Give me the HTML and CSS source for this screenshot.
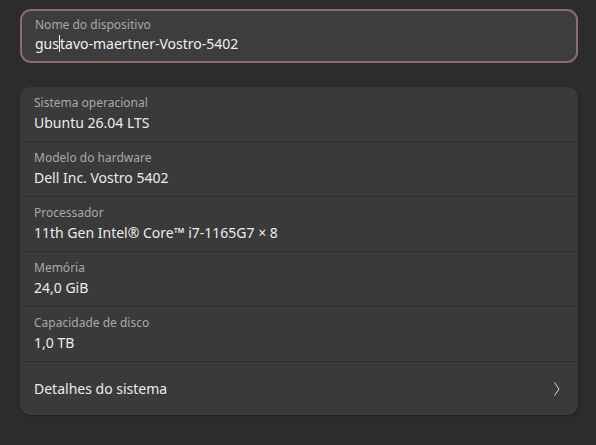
FILE: index.html
```html
<!DOCTYPE html>
<html lang="pt">
<head>
    <meta charset="UTF-8">
    <meta name="viewport" content="width=device-width, initial-scale=1.0">
    <title>Sobre</title>
    <link rel="stylesheet" href="styles.css">
</head>
<body>
    <div class="entry-row">
        <div class="row-label">Nome do dispositivo</div>
        <div class="entry-value">gus<span class="caret"></span>tavo-maertner-Vostro-5402</div>
    </div>

    <div class="info-list">
        <div class="info-row">
            <div class="row-label">Sistema operacional</div>
            <div class="row-value">Ubuntu 26.04 LTS</div>
        </div>
        <div class="info-row">
            <div class="row-label">Modelo do hardware</div>
            <div class="row-value">Dell Inc. Vostro 5402</div>
        </div>
        <div class="info-row">
            <div class="row-label">Processador</div>
            <div class="row-value">11th Gen Intel® Core™ i7-1165G7 × 8</div>
        </div>
        <div class="info-row">
            <div class="row-label">Memória</div>
            <div class="row-value">24,0 GiB</div>
        </div>
        <div class="info-row">
            <div class="row-label">Capacidade de disco</div>
            <div class="row-value">1,0 TB</div>
        </div>
        <div class="link-row">
            <span class="link-title">Detalhes do sistema</span>
            <svg class="chevron" width="8" height="16" viewBox="0 0 8 16">
                <path d="M1.5 1.5 L6 8 L1.5 14.5" fill="none" stroke="#d8d8d8" stroke-width="1"/>
            </svg>
        </div>
    </div>
</body>
</html>
```

FILE: styles.css
```css
body {
    margin: 0;
    padding: 9px 18px 0 20px;
    background-color: #2c2c2c;
    font-family: "Noto Sans", "Open Sans", sans-serif;
    color: #ececec;
    height: 445px;
    box-sizing: border-box;
}
.entry-row {
    height: 54px;
    box-sizing: border-box;
    padding: 6px 14px 0 13px;
    background-color: #3d3d3d;
    border: 2px solid #8c6d69;
    border-radius: 11px;
}
.row-label {
    font-size: 12px;
    line-height: 16px;
    color: #a9a9a9;
}
.entry-value {
    font-size: 14px;
    line-height: 21px;
    color: #f0f0f0;
}
.caret {
    display: inline-block;
    width: 1px;
    height: 17px;
    background-color: #f0f0f0;
    vertical-align: -3px;
}
.info-list {
    margin-top: 24px;
    background-color: #3a3a3a;
    border-radius: 11px;
    overflow: hidden;
    box-shadow: 1px 1px 2px rgba(0, 0, 0, 0.25);
}
.info-row {
    height: 55px;
    box-sizing: border-box;
    padding: 8px 14px 0 14px;
    border-bottom: 1px solid #2f2f2f;
}
.row-value {
    font-size: 14px;
    line-height: 23px;
}
.link-row {
    height: 53px;
    display: flex;
    align-items: center;
    justify-content: space-between;
    padding: 0 17px 0 14px;
    font-size: 14px;
}
.chevron {
    display: block;
}
```
